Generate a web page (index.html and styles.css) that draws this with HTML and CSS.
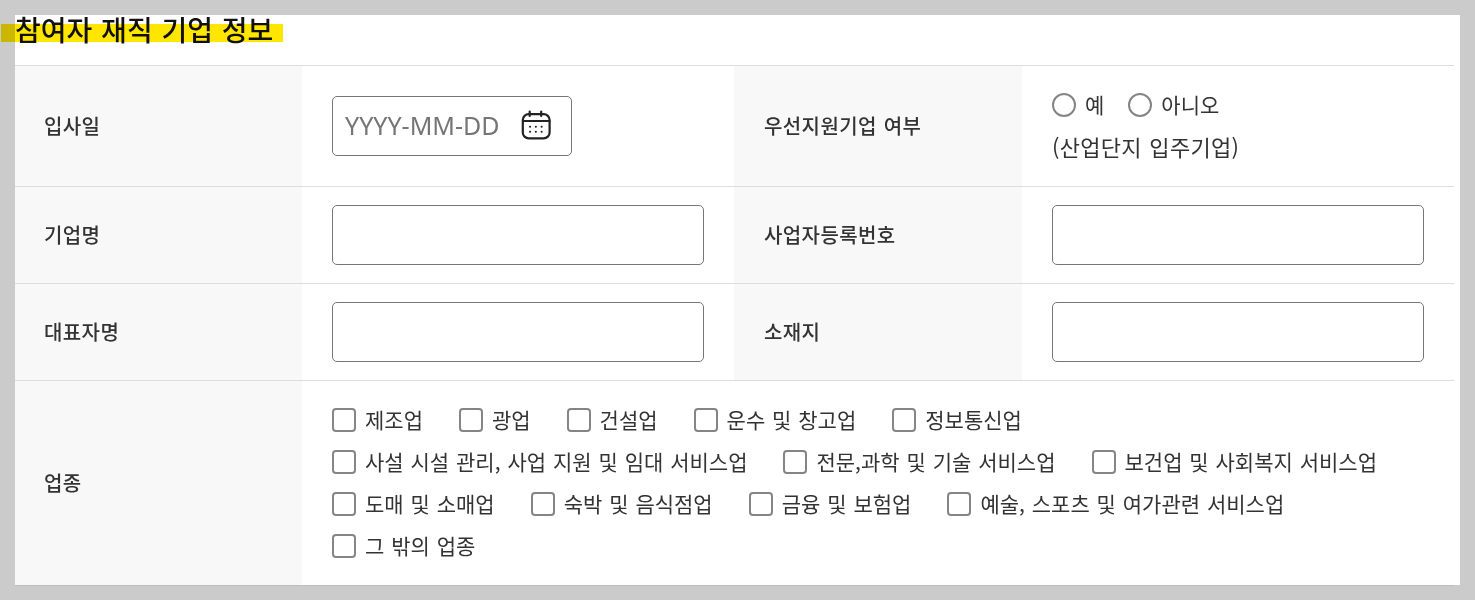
FILE: index.html
```html
<!DOCTYPE html>
<html lang="ko">
<head>
<meta charset="utf-8">
<title>참여자 재직 기업 정보</title>
<link rel="stylesheet" href="styles.css">
</head>
<body>
<main class="card">
  <h2 class="title"><span class="title-text">참여자 재직 기업 정보</span></h2>
  <table class="form">
    <colgroup><col class="c1"><col class="c2"><col class="c3"><col class="c4"></colgroup>
    <tr class="r1">
      <th>입사일</th>
      <td>
        <div class="date">
          <input class="date-input" type="text" placeholder="YYYY-MM-DD">
          <svg class="cal" width="32" height="32" viewBox="0 0 32 32" fill="none" stroke="#222" stroke-width="2.2" stroke-linecap="round">
            <rect x="2.8" y="4.1" width="26.8" height="24.3" rx="6"/>
            <path d="M3 11H29.5M9.7 1.5V6M21.2 1.5V6"/>
            <path d="M10 16.7h.1M15.8 16.7h.1M21.6 16.7h.1M10 21.7h.1M15.8 21.7h.1M21.6 21.7h.1" stroke-width="2"/>
          </svg>
        </div>
      </td>
      <th>우선지원기업 여부</th>
      <td>
        <div class="radios">
          <label class="opt"><input class="radio" type="radio" name="p">예</label>
          <label class="opt"><input class="radio" type="radio" name="p">아니오</label>
        </div>
        <p class="note">(산업단지 입주기업)</p>
      </td>
    </tr>
    <tr class="r2">
      <th>기업명</th><td><input class="field" type="text"></td>
      <th>사업자등록번호</th><td><input class="field" type="text"></td>
    </tr>
    <tr class="r2">
      <th>대표자명</th><td><input class="field" type="text"></td>
      <th>소재지</th><td><input class="field" type="text"></td>
    </tr>
    <tr class="r4">
      <th>업종</th>
      <td colspan="3">
        <div class="checks">
          <div class="line">
            <label class="opt"><input class="check" type="checkbox">제조업</label>
            <label class="opt"><input class="check" type="checkbox">광업</label>
            <label class="opt"><input class="check" type="checkbox">건설업</label>
            <label class="opt"><input class="check" type="checkbox">운수 및 창고업</label>
            <label class="opt"><input class="check" type="checkbox">정보통신업</label>
          </div>
          <div class="line">
            <label class="opt"><input class="check" type="checkbox">사설 시설 관리, 사업 지원 및 임대 서비스업</label>
            <label class="opt"><input class="check" type="checkbox">전문,과학 및 기술 서비스업</label>
            <label class="opt"><input class="check" type="checkbox">보건업 및 사회복지 서비스업</label>
          </div>
          <div class="line">
            <label class="opt"><input class="check" type="checkbox">도매 및 소매업</label>
            <label class="opt"><input class="check" type="checkbox">숙박 및 음식점업</label>
            <label class="opt"><input class="check" type="checkbox">금융 및 보험업</label>
            <label class="opt"><input class="check" type="checkbox">예술, 스포츠 및 여가관련 서비스업</label>
          </div>
          <div class="line">
            <label class="opt"><input class="check" type="checkbox">그 밖의 업종</label>
          </div>
        </div>
      </td>
    </tr>
  </table>
</main>
</body>
</html>
```
FILE: styles.css
```css
* { box-sizing: border-box; }
html, body { height: 100%; }
body {
  margin: 0;
  padding: 15px 15px 0;
  background: #cbcbcb;
  font-family: "Noto Sans CJK KR", "Noto Sans", sans-serif;
  font-size: 21px;
  word-spacing: 1px;
  color: #333;
  overflow: hidden;
}
.card {
  background: #fff;
  height: 570px;
  padding-right: 6px;
}
.title {
  margin: 0;
  height: 50px;
  font-size: 28px;
  font-weight: 500;
  line-height: 29px;
  word-spacing: 1px;
  color: #111;
}
.title-text {
  position: relative;
  display: inline-block;
}
.title-text::before {
  content: "";
  position: absolute;
  left: -14px;
  right: -10px;
  top: 9px;
  height: 18px;
  background: #ffe600;
  mix-blend-mode: multiply;
}
.form {
  width: 1439px;
  border-collapse: collapse;
  table-layout: fixed;
  border-top: 1px solid #ddd;
}
.c1 { width: 287px; }
.c2 { width: 432px; }
.c3 { width: 288px; }
.c4 { width: 432px; }
tr { border-bottom: 1px solid #ddd; }
.r1 { height: 121px; }
.r2 { height: 97px; }
.r4 { height: 205px; border-bottom-color: #bdbdbd; }
th {
  background: #f8f8f8;
  font-size: 20px;
  font-weight: 500;
  text-align: left;
  padding: 0 0 2px 29px;
  letter-spacing: 0.4px;
}
th:nth-child(3) { padding-left: 30px; }
td { padding: 0 30px; }
.field, .date {
  display: block;
  width: 372px;
  height: 60px;
  border: 1px solid #767676;
  border-radius: 5px;
  background: #fff;
}
.date {
  width: 240px;
  display: flex;
  align-items: center;
  padding: 0 19px 0 12px;
}
.date-input {
  flex: 1;
  min-width: 0;
  border: 0;
  padding: 0 0 2px;
  outline: 0;
  font-family: "Noto Sans", sans-serif;
  font-size: 25px;
}
.date-input::placeholder { color: #757575; }
.cal { flex: none; }
.radios { display: flex; gap: 24px; }
.opt {
  display: inline-flex;
  align-items: flex-start;
  gap: 9px;
  height: 24px;
  line-height: 22px;
  white-space: nowrap;
}
.radio, .check {
  appearance: none;
  flex: none;
  width: 24px;
  height: 24px;
  margin: 0;
  border: 2px solid #858585;
  background: #fff;
}
.radio { border-radius: 50%; }
.check { border-radius: 4px; }
.note { margin: 16px 0 0; font-size: 22px; line-height: 27px; letter-spacing: 0.3px; }
.checks { display: flex; flex-direction: column; gap: 18px; }
.line { display: flex; gap: 36px; }
```
